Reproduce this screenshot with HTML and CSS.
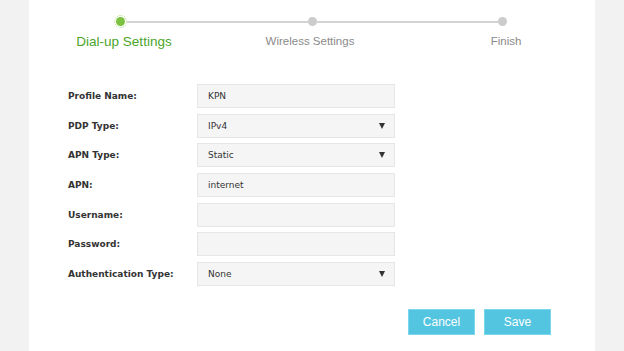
FILE: index.html
```html
<!DOCTYPE html>
<html>
<head>
<meta charset="utf-8">
<link rel="stylesheet" href="styles.css">
</head>
<body>
<div class="panel">
  <div class="dots">
    <span class="dot active"></span>
    <span class="line"></span>
    <span class="dot"></span>
    <span class="line"></span>
    <span class="dot"></span>
  </div>
  <div class="labels">
    <span class="step active">Dial-up Settings</span>
    <span class="step mid">Wireless Settings</span>
    <span class="step last">Finish</span>
  </div>
  <div class="form">
    <div class="row"><span class="lbl">Profile Name:</span><span class="field">KPN</span></div>
    <div class="row"><span class="lbl">PDP Type:</span><span class="field select">IPv4<i class="arrow"></i></span></div>
    <div class="row"><span class="lbl">APN Type:</span><span class="field select">Static<i class="arrow"></i></span></div>
    <div class="row"><span class="lbl">APN:</span><span class="field">internet</span></div>
    <div class="row"><span class="lbl">Username:</span><span class="field"></span></div>
    <div class="row"><span class="lbl">Password:</span><span class="field"></span></div>
    <div class="row"><span class="lbl">Authentication Type:</span><span class="field select">None<i class="arrow"></i></span></div>
  </div>
  <div class="buttons">
    <button class="btn">Cancel</button>
    <button class="btn">Save</button>
  </div>
</div>
</body>
</html>
```
FILE: styles.css
```css
html, body {
  margin: 0;
  padding: 0;
  background: #f2f2f2;
  height: 351px;
  overflow: hidden;
}
.panel {
  margin-left: 29px;
  width: 566px;
  height: 351px;
  background: #ffffff;
  box-sizing: border-box;
  padding-top: 15px;
}
.dots {
  display: flex;
  align-items: center;
  height: 13px;
  margin-left: 84.5px;
  width: 393px;
}
.dot {
  width: 9px;
  height: 9px;
  border-radius: 50%;
  background: #cccccc;
  flex: none;
}
.dot.active {
  width: 9px;
  height: 9px;
  background: #7cc242;
  border: 1px dotted #a8d87e;
  padding: 1px;
  background-clip: content-box;
  box-sizing: content-box;
}
.line {
  flex: 1;
  height: 2px;
  background: #d3d3d3;
}
.labels {
  display: grid;
  grid-template-columns: repeat(3, 190px);
  margin-top: 5px;
  font-family: "Liberation Sans", Arial, sans-serif;
  align-items: center;
  height: 16px;
}
.step {
  text-align: center;
  font-size: 11.5px;
  color: #8a8a8a;
}
.step.active {
  font-size: 13.5px;
  color: #4aa52a;
}
.step.mid {
  padding-right: 8px;
}
.step.last {
  padding-left: 4px;
}
.form {
  display: flex;
  flex-direction: column;
  gap: 5.67px;
  margin-top: 35px;
  padding-left: 39px;
  font-family: "DejaVu Sans", Verdana, sans-serif;
  font-size: 9px;
  color: #333333;
}
.row {
  display: flex;
  align-items: center;
  height: 24px;
}
.lbl {
  width: 129px;
  font-weight: bold;
  flex: none;
}
.field {
  box-sizing: border-box;
  width: 198px;
  height: 24px;
  background: #f5f5f5;
  border: 1px solid #e6e6e6;
  display: flex;
  align-items: center;
  padding-left: 10px;
  padding-right: 9px;
  justify-content: space-between;
}
.arrow {
  width: 0;
  height: 0;
  border-left: 3.5px solid transparent;
  border-right: 3.5px solid transparent;
  border-top: 6px solid #333333;
}
.buttons {
  display: flex;
  justify-content: flex-end;
  gap: 9px;
  margin-top: 23px;
  padding-right: 44px;
}
.btn {
  width: 67px;
  height: 26px;
  border: 1px solid #7ad6ea;
  background: #53c5e0;
  color: #ffffff;
  font-family: "Liberation Sans", Arial, sans-serif;
  font-size: 12px;
  padding: 0;
  margin: 0;
}
```
